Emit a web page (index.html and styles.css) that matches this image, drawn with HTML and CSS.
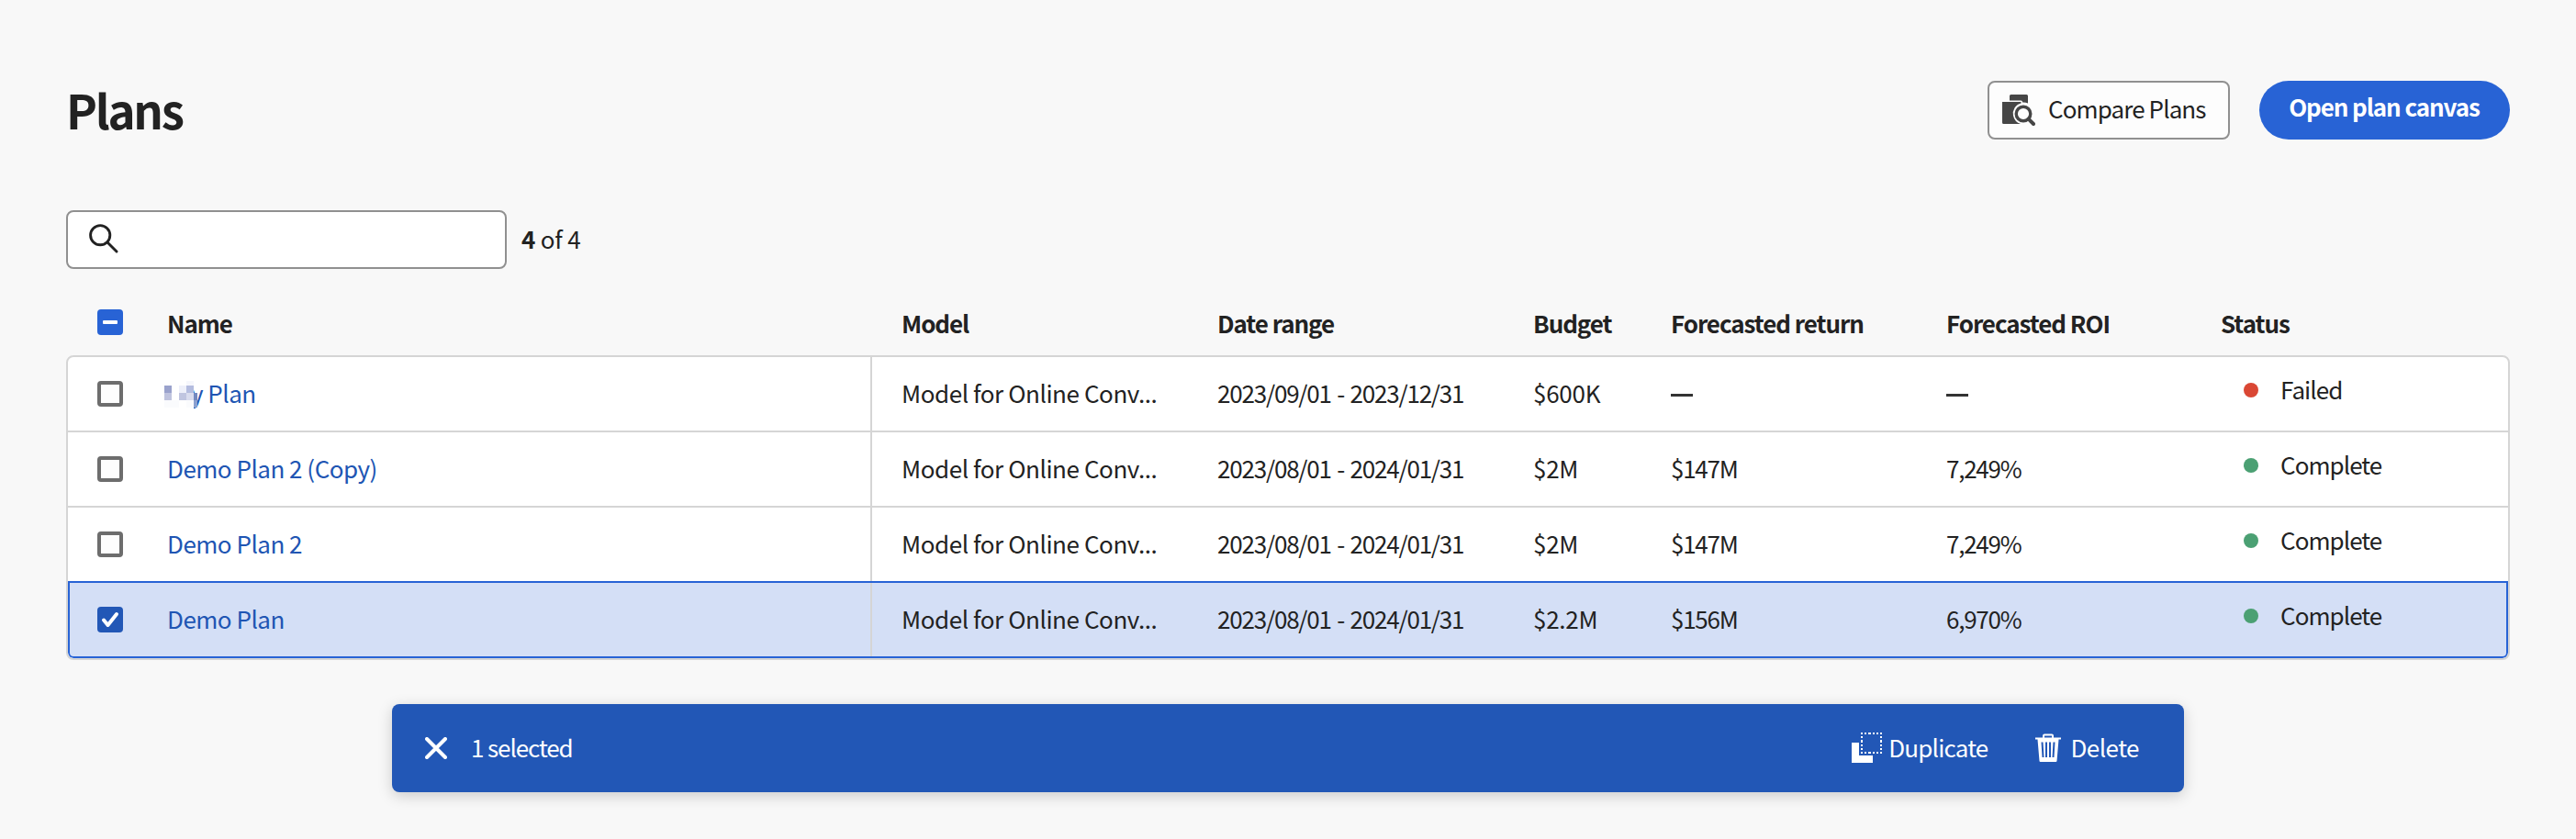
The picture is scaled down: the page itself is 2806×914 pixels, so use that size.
FILE: index.html
```html
<!DOCTYPE html>
<html lang="en">
<head>
<meta charset="utf-8">
<title>Plans</title>
<link rel="stylesheet" href="styles.css">
</head>
<body>
<main class="page">
  <header class="top">
    <h1 class="title">Plans</h1>
    <div class="actions">
      <button class="btn compare">
        <svg class="compare-icon" width="36" height="36" viewBox="0 0 36 36">
          <path fill="#464646" d="M8 2.500a1.500 1.500 0 0 1 1.500-1.500H26.500a1.500 1.500 0 0 1 1.500 1.500V10.500a12 12 0 0 0-6-1V9a1.500 1.500 0 0 0-1.500-1.500H8z"/>
          <path fill="#464646" d="M0 9h20.500V10.500A11.500 11.500 0 0 0 12 24Q13.500 31 20 33H1.500A1.500 1.500 0 0 1 0 31.500z"/>
          <circle cx="23" cy="22" r="7.800" fill="#fdfdfd" stroke="#464646" stroke-width="3.400"/>
          <path d="M28.600 27.600 34 33" stroke="#464646" stroke-width="4" stroke-linecap="round"/>
        </svg>
        <span class="compare-label">Compare Plans</span>
      </button>
      <button class="btn open"><span class="open-label">Open plan canvas</span></button>
    </div>
  </header>

  <div class="search-row">
    <div class="search">
      <svg class="search-icon" width="32" height="32" viewBox="0 0 32 32" fill="none" stroke="#222" stroke-width="2.900" stroke-linecap="round">
        <circle cx="12.200" cy="12.200" r="10.600"/><path d="M20 20 30 30"/>
      </svg>
    </div>
    <span class="count"><b>4</b> of 4</span>
  </div>

  <section class="table">
    <div class="row head">
      <span class="check-cell"><span class="box mixed"></span></span>
      <span class="h-name">Name</span><span class="h-model">Model</span><span class="h-date">Date range</span><span class="h-budget">Budget</span><span class="h-return">Forecasted return</span><span class="h-roi">Forecasted ROI</span><span class="h-status">Status</span>
    </div>
    <div class="body">
      <div class="row">
        <span class="check-cell"><span class="box"></span></span>
        <span class="name masked"><svg class="mosaic" width="36" height="30" viewBox="0 0 36 30" shape-rendering="crispEdges">
          <path fill="#fff" d="M0 0h32v30H0z"/>
          <path fill="#9aa2cc" d="M0 5h8v8H0z"/><path fill="#bfc3de" d="M0 13h8v8H0z"/><path fill="#fafbfd" d="M0 21h16v8H0zM24 21h8v8h-8z"/>
          <path fill="#eef0fa" d="M16 5h8v8h-8z"/><path fill="#c0c5e0" d="M16 13h8v8h-8z"/><path fill="#f6f7fc" d="M24 0h8v5h-8z"/>
          <path fill="#b4bcdf" d="M24 5h8v8h-8z"/><path fill="#d9dcee" d="M24 13h8v8h-8z"/><path fill="#7388bf" d="M32 13h4v8h-4z"/><path fill="#8aa0cf" d="M32 21h4v8h-4z"/>
        </svg>y Plan</span>
        <span class="model">Model for Online Conv...</span><span class="date">2023/09/01 - 2023/12/31</span><span class="budget">$600K</span><span class="dash"></span><span class="dash"></span><span class="status failed">Failed</span>
      </div>
      <div class="row">
        <span class="check-cell"><span class="box"></span></span>
        <span class="name">Demo Plan 2 (Copy)</span>
        <span class="model">Model for Online Conv...</span><span class="date">2023/08/01 - 2024/01/31</span><span class="budget">$2M</span><span class="num">$147M</span><span class="num">7,249%</span><span class="status">Complete</span>
      </div>
      <div class="row">
        <span class="check-cell"><span class="box"></span></span>
        <span class="name">Demo Plan 2</span>
        <span class="model">Model for Online Conv...</span><span class="date">2023/08/01 - 2024/01/31</span><span class="budget">$2M</span><span class="num">$147M</span><span class="num">7,249%</span><span class="status">Complete</span>
      </div>
      <div class="row selected">
        <span class="check-cell"><span class="box checked"><svg width="28" height="28" viewBox="0 0 28 28" fill="none" stroke="#fff" stroke-width="4" stroke-linecap="round" stroke-linejoin="round"><path d="M7 14.500 11.500 20 21 8"/></svg></span></span>
        <span class="name">Demo Plan</span>
        <span class="model">Model for Online Conv...</span><span class="date">2023/08/01 - 2024/01/31</span><span class="budget">$2.2M</span><span class="num">$156M</span><span class="num">6,970%</span><span class="status">Complete</span>
      </div>
    </div>
  </section>

  <div class="bar">
    <svg width="24" height="24" viewBox="0 0 24 24" stroke="#fff" stroke-width="4" stroke-linecap="round"><path d="M2 2 22 22M22 2 2 22"/></svg>
    <span class="selected-count">1 selected</span>
    <span class="bar-action duplicate">
      <svg width="34" height="34" viewBox="0 0 34 34" fill="#fff" shape-rendering="crispEdges"><path d="M0 12q0-1 1-1h7v14h15v7q0 1-1 1H1q-1 0-1-1z"/><path fill="none" stroke="#fff" stroke-width="2" stroke-dasharray="2.200 2" d="M10 1h23.200M10 22h23.200M11 4.200v16M32 4.200v16"/></svg>
      <span class="duplicate-label">Duplicate</span>
    </span>
    <span class="bar-action delete">
      <svg width="28" height="32" viewBox="0 0 28 32"><path fill="none" stroke="#fff" stroke-width="2" d="M9 5V2.500Q9 1.500 10 1.500h8q1 0 1 1V5"/><path fill="#fff" d="M0 4.500h28v2h-2.500l-2 23.500q-.1 1-1.100 1H5.600q-1 0-1.100-1L2.500 6.500H0z"/><path stroke="#2257b6" stroke-width="2" d="m7.500 9.500 1 16.500M12 9.500v16.500M16 9.500v16.500M20.500 9.500l-1 16.500"/></svg>
      <span class="delete-label">Delete</span>
    </span>
  </div>
</main>
</body>
</html>
```
FILE: styles.css
```css
* { box-sizing: border-box; }
body {
  margin: 0;
  background: #f8f8f8;
  color: #222;
  font: 26px/32px "Noto Sans CJK JP", "Noto Sans", sans-serif;
}
.page { height: 914px; padding: 88px 72px 0; overflow: hidden; }
.top { display: flex; justify-content: space-between; height: 64px; }
.title { margin: 0; font-size: 51px; line-height: 62px; font-weight: 700; letter-spacing: -2.300px; }
.actions { display: flex; gap: 32px; }
.btn { display: flex; align-items: center; height: 64px; padding: 0; color: #222; font: inherit; }
.compare { width: 264px; padding-left: 14px; border: 2px solid #909090; border-radius: 8px; background: #fdfdfd; }
.compare-label { margin-left: 14px; padding-bottom: 4px; letter-spacing: -.9px; }
.open { width: 273px; justify-content: center; border: 0; border-radius: 32px; background: #2863d5; color: #fff; font-weight: 700; letter-spacing: -1.1px; }
.open-label { padding: 0 1px 8px 0; }

.search-row { display: flex; align-items: center; gap: 16px; height: 64px; margin-top: 77px; }
.search { display: flex; align-items: center; width: 480px; height: 64px; padding: 0 0 3px 23px; border: 2px solid #909090; border-radius: 8px; background: #fff; }
.count { padding-bottom: 3px; letter-spacing: -.2px; }

.row { display: grid; grid-template-columns: 108px 766px 378px 344px 150px 300px 299px 1fr; align-items: center; height: 82px; white-space: nowrap; }
.head { height: 94px; padding: 22px 0 0 2px; font-weight: 700; letter-spacing: -1.05px; }
.head > span:not(.check-cell) { padding-top: 2px; }
.h-model { padding-left: 34px; }
.check-cell { padding-left: 32px; }
.box { display: block; width: 28px; height: 28px; border: 4px solid #6d6d6d; border-radius: 4px; background: #fdfdfd; }
.box svg { display: block; }
.mixed { display: flex; align-items: center; justify-content: center; border: 0; background: #2863d5; }
.mixed::after { content: ""; width: 16px; height: 4px; border-radius: 1px; background: #fff; }
.checked { border: 0; background: #2257b6; }
.body { border: 2px solid #d5d5d5; border-radius: 8px; background: #fff; overflow: hidden; }
.body .row { border-bottom: 2px solid #d5d5d5; }
.name, .date, .budget, .num { padding-bottom: 3px; }
.name { position: relative; color: #2055b3; letter-spacing: -.5px; }
.masked { padding-left: 26px; }
.mosaic { position: absolute; left: -3px; top: 3px; }
.model { display: flex; align-items: center; align-self: stretch; padding: 0 0 3px 32px; border-left: 2px solid #d5d5d5; letter-spacing: -.43px; }
.date { letter-spacing: -1.2px; word-spacing: 1.8px; }
.budget { letter-spacing: -.25px; }
.num { letter-spacing: -1.25px; }
.dash { width: 24px; height: 3px; margin-top: 2px; background: #333; }
.status { display: flex; align-items: center; gap: 24px; padding: 0 0 10px 25px; letter-spacing: -.95px; }
.status::before { content: ""; width: 16px; height: 16px; margin-top: 2px; border-radius: 50%; background: #4ba073; }
.failed::before { background: #da4734; }
.body .selected { position: relative; grid-template-columns: 106px 766px 378px 344px 150px 300px 299px 1fr; height: 84px; margin-top: -2px; border: 2px solid #2863d5; border-radius: 0 0 6px 6px; background: #d4dff6; }
.selected .check-cell { padding-left: 30px; }

.bar { display: flex; align-items: center; width: 1952px; height: 96px; margin: 48px 0 0 355px; padding: 0 49px 0 36px; border-radius: 8px; background: #2257b6; color: #fff; box-shadow: 0 4px 16px rgba(0, 0, 0, .18); }
.selected-count { margin: 0 auto 0 26px; padding-bottom: 3px; letter-spacing: -1.1px; }
.bar-action { display: flex; align-items: center; gap: 6px; }
.delete { margin-left: 52px; gap: 10px; }
.duplicate-label { padding-bottom: 3px; letter-spacing: -.8px; }
.delete-label { padding-bottom: 3px; letter-spacing: -.5px; }
```
